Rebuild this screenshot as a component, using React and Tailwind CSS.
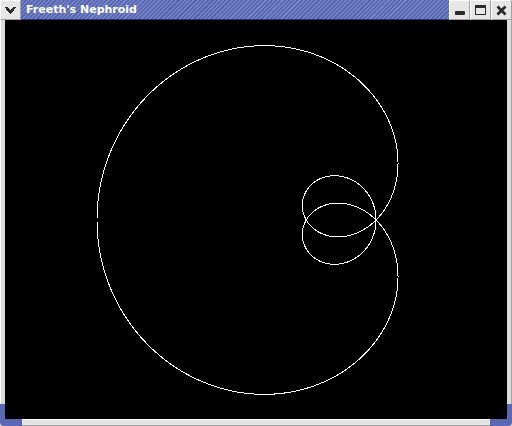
import React from "react";

const S = 69.75;
const OX = 301.25;
const OY = 200;

// Freeth's nephroid: r = 1 + 2 sin(t/2)
const points = (() => {
  const pts = [];
  const n = 1600;
  for (let i = 0; i <= n; i++) {
    const t = (i / n) * 4 * Math.PI;
    const r = 1 + 2 * Math.sin(t / 2);
    const x = OX + S * r * Math.cos(t);
    const y = OY - S * r * Math.sin(t);
    pts.push(`${x.toFixed(2)},${y.toFixed(2)}`);
  }
  return pts.join(" ");
})();

const Btn = ({ children }) => (
  <div className="w-[21px] h-[20px] flex items-center justify-center bg-[#e6e6e6] border-l border-t border-white border-r border-r-[#a0a0a0] border-b border-b-[#a0a0a0]">
    {children}
  </div>
);

const App = () => {
  return (
    <div className="w-[512px] h-[426px] flex flex-col bg-[#dcdcdc] overflow-hidden" style={{ fontFamily: "'DejaVu Sans', sans-serif" }}>
      <div className="h-[20px] flex">
        <Btn>
          <svg width="11" height="8" viewBox="0 0 11 8" shapeRendering="crispEdges">
            <path d="M1 1 L5.5 6 L10 1" stroke="#2a2a2a" strokeWidth="2.6" fill="none" />
          </svg>
        </Btn>
        <div className="flex-1 flex items-center pl-[5px] border-b border-[#2c3470] bg-[repeating-linear-gradient(135deg,#5866b0_0px,#5866b0_1.5px,#7382c6_1.5px,#7382c6_3px)]">
          <span className="text-white font-bold text-[11px] leading-none">Freeth's Nephroid</span>
        </div>
        <Btn>
          <div className="w-[10px] h-[4px] bg-[#2a2a2a] mt-[5px] rounded-[1px]" />
        </Btn>
        <Btn>
          <div className="w-[11px] h-[10px] border border-[#2a2a2a] border-t-[3px]" />
        </Btn>
        <Btn>
          <svg width="11" height="11" viewBox="0 0 11 11">
            <path d="M1.5 1.5 L9.5 9.5 M9.5 1.5 L1.5 9.5" stroke="#2a2a2a" strokeWidth="2.8" fill="none" />
          </svg>
        </Btn>
      </div>
      <div className="flex-1 flex">
        <div className="w-[5px] flex flex-col">
          <div className="flex-1 border-l border-white bg-[#dcdcdc]" />
          <div className="h-[15px] bg-[#5a68b4]" />
        </div>
        <div className="flex-1 bg-black">
          <svg width="502" height="399" viewBox="0 0 502 399" className="block">
            <polyline points={points} fill="none" stroke="#ffffff" strokeWidth="1" shapeRendering="crispEdges" />
          </svg>
        </div>
        <div className="w-[5px] flex flex-col">
          <div className="flex-1 border-r border-[#a0a0a0] bg-[#dcdcdc]" />
          <div className="h-[15px] bg-[#5a68b4]" />
        </div>
      </div>
      <div className="h-[7px] flex">
        <div className="w-[22px] bg-[#5a68b4] rounded-bl-[4px]" />
        <div className="flex-1 bg-[#e4e4e4] border-t border-white border-b border-b-[#a0a0a0]" />
        <div className="w-[22px] bg-[#5a68b4] rounded-br-[4px]" />
      </div>
    </div>
  );
};

export default App;
